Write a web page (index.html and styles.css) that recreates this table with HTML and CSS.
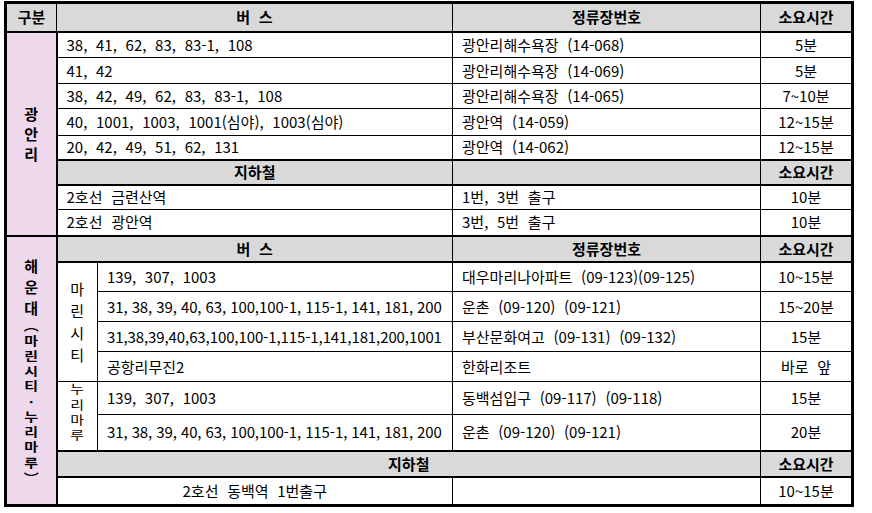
FILE: index.html
```html
<!DOCTYPE html>
<html lang="ko">
<head>
<meta charset="utf-8">
<link rel="stylesheet" href="styles.css">
</head>
<body>
<table class="t">
  <colgroup>
    <col class="c1"><col class="c2a"><col class="c2b"><col class="c3"><col class="c4">
  </colgroup>
  <tr class="hd r-h">
    <th>구분</th><th colspan="2">버 스</th><th>정류장번호</th><th>소요시간</th>
  </tr>
  <tr class="r26 tk">
    <td rowspan="8" class="area"><span class="v1">광<br>안<br>리</span></td>
    <td colspan="2" class="tx">38, 41, 62, 83, 83-1, 108</td><td class="tx">광안리해수욕장 (14-068)</td><td class="tm">5분</td>
  </tr>
  <tr class="r26">
    <td colspan="2" class="tx">41, 42</td><td class="tx">광안리해수욕장 (14-069)</td><td class="tm">5분</td>
  </tr>
  <tr class="r25">
    <td colspan="2" class="tx">38, 42, 49, 62, 83, 83-1, 108</td><td class="tx">광안리해수욕장 (14-065)</td><td class="tm">7~10분</td>
  </tr>
  <tr class="r27">
    <td colspan="2" class="tx">40, 1001, 1003, 1001(심야), 1003(심야)</td><td class="tx">광안역 (14-059)</td><td class="tm">12~15분</td>
  </tr>
  <tr class="r24">
    <td colspan="2" class="tx">20, 42, 49, 51, 62, 131</td><td class="tx">광안역 (14-062)</td><td class="tm">12~15분</td>
  </tr>
  <tr class="hd r25 tk">
    <th colspan="2">지하철</th><th></th><th>소요시간</th>
  </tr>
  <tr class="r25 tk">
    <td colspan="2" class="tx">2호선 금련산역</td><td class="tx">1번, 3번 출구</td><td class="tm">10분</td>
  </tr>
  <tr class="r26">
    <td colspan="2" class="tx">2호선 광안역</td><td class="tx">3번, 5번 출구</td><td class="tm">10분</td>
  </tr>
  <tr class="hd r26 tk">
    <td rowspan="9" class="area">
      <span class="v2">
        <span class="g1">해<br>운<br>대</span>
        <span class="g2">︵<br>마<br>린<br>시<br>티<br>·<br>누<br>리<br>마<br>루<br>︶</span>
      </span>
    </td>
    <th colspan="2">버 스</th><th>정류장번호</th><th>소요시간</th>
  </tr>
  <tr class="r30 tk">
    <td rowspan="4" class="sub"><span class="v3">마<br>린<br>시<br>티</span></td>
    <td class="tx">139, 307, 1003</td><td class="tx">대우마리나아파트 (09-123)(09-125)</td><td class="tm">10~15분</td>
  </tr>
  <tr class="r30">
    <td class="tx sq">31, 38, 39, 40, 63, 100,100-1, 115-1, 141, 181, 200</td><td class="tx">운촌 (09-120) (09-121)</td><td class="tm">15~20분</td>
  </tr>
  <tr class="r30">
    <td class="tx sq">31,38,39,40,63,100,100-1,115-1,141,181,200,1001</td><td class="tx">부산문화여고 (09-131) (09-132)</td><td class="tm">15분</td>
  </tr>
  <tr class="r30">
    <td class="tx">공항리무진2</td><td class="tx">한화리조트</td><td class="tm">바로 앞</td>
  </tr>
  <tr class="r28">
    <td rowspan="2" class="sub"><span class="v4">누<br>리<br>마<br>루</span></td>
    <td class="tx">139, 307, 1003</td><td class="tx">동백섬입구 (09-117) (09-118)</td><td class="tm">15분</td>
  </tr>
  <tr class="r31">
    <td class="tx sq">31, 38, 39, 40, 63, 100,100-1, 115-1, 141, 181, 200</td><td class="tx">운촌 (09-120) (09-121)</td><td class="tm">20분</td>
  </tr>
  <tr class="hd r26 tk">
    <th colspan="3">지하철</th><th>소요시간</th>
  </tr>
  <tr class="r28 tk">
    <td colspan="2" class="ctr">2호선 동백역 1번출구</td><td></td><td class="tm">10~15분</td>
  </tr>
</table>
</body>
</html>
```

FILE: styles.css
```css
html, body {
  margin: 0;
  padding: 0;
  background: #ffffff;
}
body {
  padding: 1px 0 0 4px;
  font-family: "Noto Sans CJK KR", "Noto Sans", sans-serif;
  font-size: 15px;
  color: #000;
}
.t {
  border-collapse: collapse;
  table-layout: fixed;
  width: 847px;
  border: 3px solid #000;
  word-spacing: 4.5px;
}
.c1 { width: 51px; }
.c2a { width: 41px; }
.c2b { width: 355px; }
.c3 { width: 308px; }
.c4 { width: 92px; }

.t td, .t th {
  border: 1px solid #000;
  padding: 0;
  line-height: 18px;
  white-space: nowrap;
  overflow: hidden;
}
.t th {
  background: #d9d9d9;
  font-weight: bold;
  text-align: center;
}
.tk > td, .tk > th { border-top: 2px solid #000; }
.hd > th { border-bottom: 2px solid #000; }

.r-h { height: 29px; }
.r24 { height: 24px; }
.r25 { height: 25px; }
.r26 { height: 26px; }
.r27 { height: 27px; }
.r28 { height: 28px; }
.r30 { height: 30px; }
.r31 { height: 31px; }

.t td.tx {
  padding-left: 9px;
  text-align: left;
}
.t td.sq {
  word-spacing: 0;
  letter-spacing: -0.1px;
}
.tm { text-align: center; }
.ctr { text-align: center; }

.t td.area {
  background: #eed8ec;
  text-align: center;
  vertical-align: middle;
  font-weight: bold;
  border-right: 2px solid #000;
}
.v1 {
  display: inline-block;
  line-height: 20px;
}
.v2 {
  display: flex;
  flex-direction: column;
  align-items: center;
}
.g1 { display: block; line-height: 21px; }
.g2 {
  display: block;
  line-height: 19px;
  transform: scaleY(0.8);
  margin: -21px 0 -21px;
}

.t td.sub {
  text-align: center;
  vertical-align: middle;
}
.v3 { display: inline-block; line-height: 22px; }
.v4 {
  display: inline-block;
  line-height: 19px;
  transform: scaleY(0.8);
  margin: -8px 0 -8px;
}
```
